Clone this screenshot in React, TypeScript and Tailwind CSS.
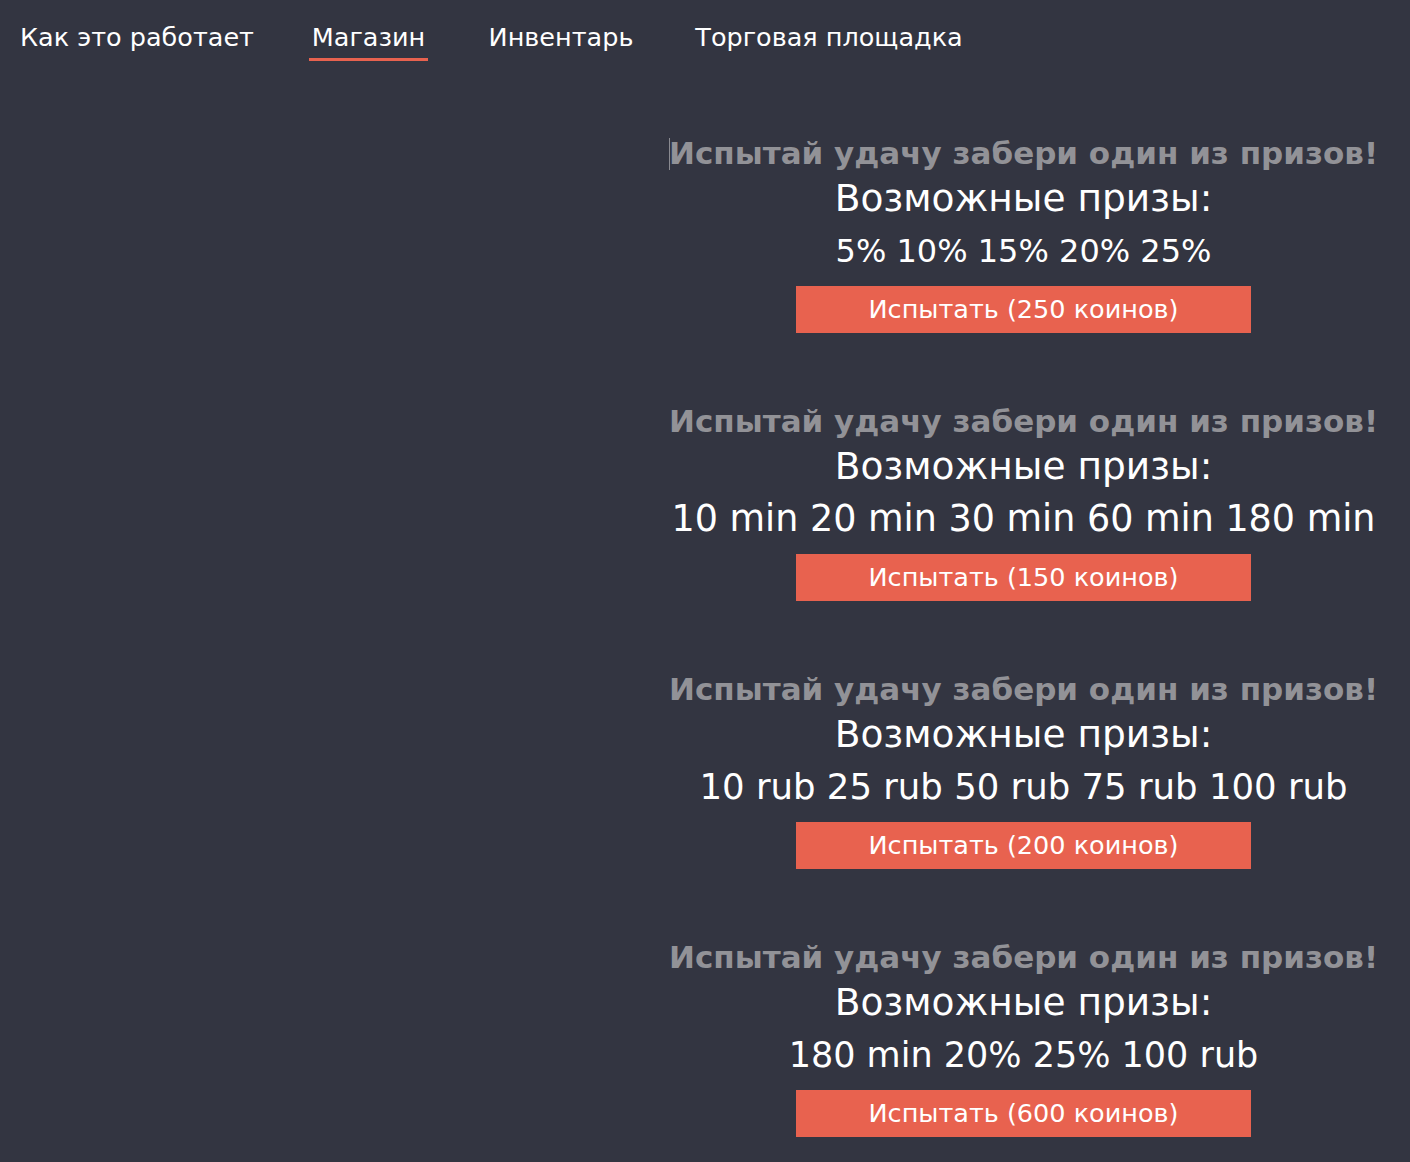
import React from "react";

const blocks = [
  { prizes: "5% 10% 15% 20% 25%", size: "text-[32px]", cost: "Испытать (250 коинов)", caret: true },
  { prizes: "10 min 20 min 30 min 60 min 180 min", size: "text-[36.5px]", cost: "Испытать (150 коинов)", caret: false },
  { prizes: "10 rub 25 rub 50 rub 75 rub 100 rub", size: "text-[35.5px]", cost: "Испытать (200 коинов)", caret: false },
  { prizes: "180 min 20% 25% 100 rub", size: "text-[35px]", cost: "Испытать (600 коинов)", caret: false },
];

const navItems = [
  { label: "Как это работает", w: "w-[228px]", active: false },
  { label: "Магазин", w: "w-[119px]", active: true },
  { label: "Инвентарь", w: "w-[150px]", active: false },
  { label: "Торговая площадка", w: "w-[270px]", active: false },
];

export default function App() {
  return (
    <div className="min-h-[1162px] w-full bg-[#333541] text-white font-['DejaVu_Sans',sans-serif]">
      <nav className="flex gap-[58px] pl-[23px] pt-[19px]">
        {navItems.map((item) => (
          <a
            key={item.label}
            className={
              item.active
                ? `${item.w} flex justify-center whitespace-nowrap text-[25.5px] leading-[36px] pb-[3px] border-b-[3px] border-[#e8624f] text-white`
                : `${item.w} flex justify-center whitespace-nowrap text-[25.5px] leading-[36px] pb-[3px] border-b-[3px] border-transparent text-white`
            }
          >
            {item.label}
          </a>
        ))}
      </nav>
      <main className="flex justify-end pr-[32px] pt-[74px]">
        <div className="flex w-[709px] flex-col items-center gap-[70px]">
          {blocks.map((b, i) => (
            <section key={i} className="flex flex-col items-center">
              <h2 className="relative whitespace-nowrap text-[31px] font-bold leading-[36px] text-[#929297]">
                {b.caret && (
                  <span className="absolute left-0 top-[3px] h-[32px] w-px bg-[#8a8a90]" />
                )}
                Испытай удачу забери один из призов!
              </h2>
              <p className="whitespace-nowrap text-[37.5px] leading-[54px]">Возможные призы:</p>
              <p className={`whitespace-nowrap ${b.size} leading-[52px]`}>{b.prizes}</p>
              <button className="mt-[9px] h-[47px] bg-[#e8624f] px-[73px] text-[25.5px] text-white">
                {b.cost}
              </button>
            </section>
          ))}
        </div>
      </main>
    </div>
  );
}
